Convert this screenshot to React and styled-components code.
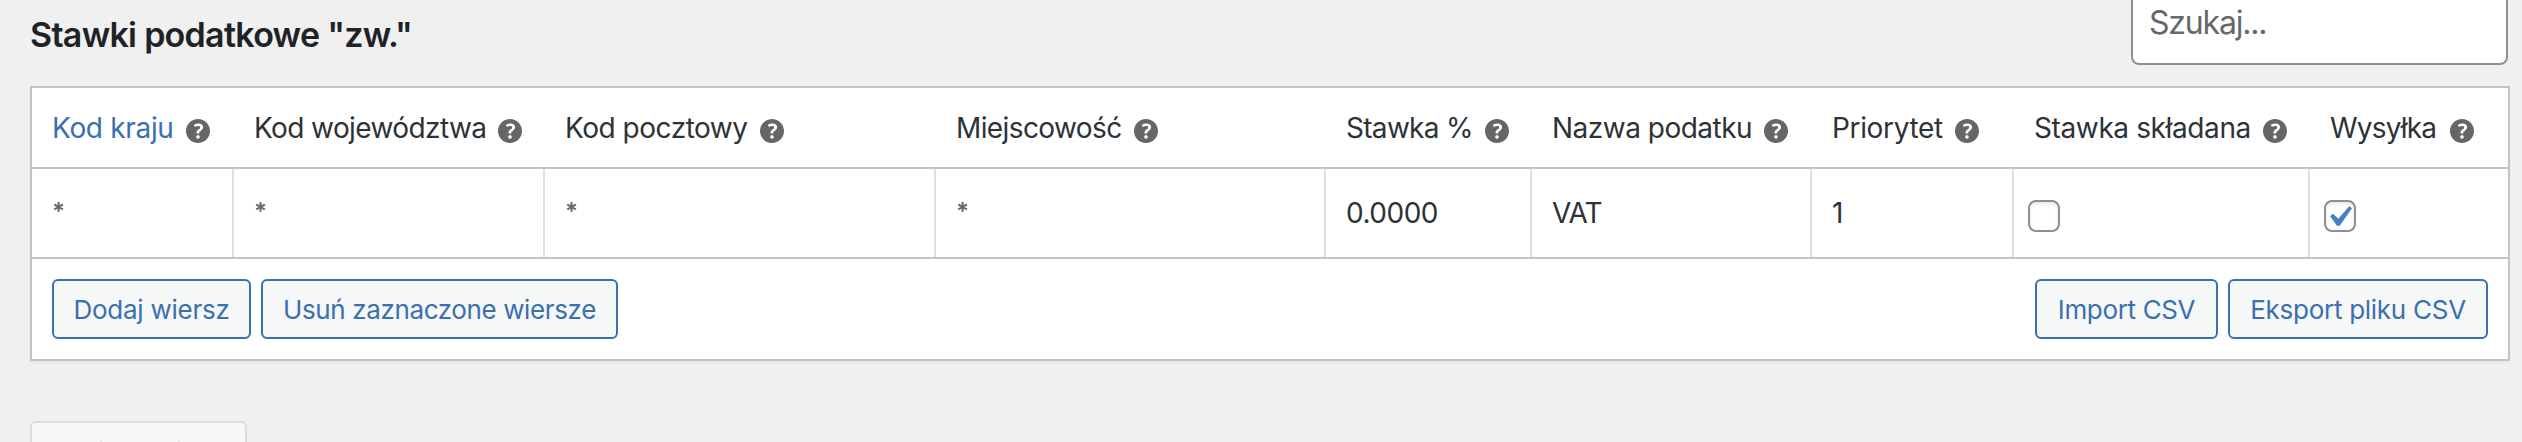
import React, { useState } from 'react';
import styled, { createGlobalStyle, css } from 'styled-components';

const GlobalStyle = createGlobalStyle`
  *, *::before, *::after {
    box-sizing: border-box;
  }

  body {
    margin: 0;
    background: #f0f0f0;
    color: #2c3338;
    font-family: Inter, "Liberation Sans", sans-serif;
    font-size: 28px;
    line-height: 34px;
  }
`;

const Page = styled.main`
  height: 442px;
  padding: 0 12px 0 30px;
  overflow: hidden;
`;

const TopBar = styled.header`
  display: flex;
  justify-content: space-between;
  align-items: flex-start;
  height: 86px;
  padding-right: 2px;
`;

const Title = styled.h2`
  margin: 14px 0 0;
  color: #1d2327;
  font-size: 34px;
  font-weight: 600;
  line-height: 41px;
  letter-spacing: -0.72px;
`;

const SearchInput = styled.input`
  width: 377px;
  height: 65px;
  padding: 0 16px 18px;
  border: 2px solid #8c8f94;
  border-top: 0;
  border-radius: 0 0 8px 8px;
  background: #fff;
  color: #2c3338;
  font-family: inherit;
  font-size: 32px;
  letter-spacing: -1.2px;
  outline: none;

  &::placeholder {
    color: #646970;
    opacity: 1;
  }
`;

const Table = styled.section`
  border: 2px solid #c3c4c7;
  background: #fff;
  box-shadow: 0 2px 2px rgba(0, 0, 0, 0.04);
`;

const columnGrid = css`
  display: grid;
  grid-template-columns: 202px 311px 391px 390px 206px 280px 202px 296px 1fr;
  border-bottom: 2px solid #c3c4c7;
`;

const HeadRow = styled.div`
  ${columnGrid}
  height: 81px;
`;

const HeadCell = styled.div`
  display: flex;
  align-items: flex-start;
  gap: ${({ $gap }) => $gap || 12}px;
  padding: 23px 0 0 20px;
  color: ${({ $active }) => ($active ? '#3a6fb0' : '#2c3338')};
  letter-spacing: ${({ $tracking }) => $tracking}px;
  white-space: nowrap;
`;

const HelpIcon = styled.svg`
  flex: none;
  width: 24px;
  height: 24px;
  margin-top: 8px;
  fill: #666;
`;

const BodyRow = styled.div`
  ${columnGrid}
  height: 90px;
`;

const Cell = styled.div`
  display: flex;
  align-items: center;
  padding-left: ${({ $check }) => ($check ? 14 : 20)}px;
  border-right: 2px solid #dfdfdf;
  letter-spacing: ${({ $tracking }) => $tracking || 0}px;

  &:last-child {
    border-right: 0;
  }
`;

const Wildcard = styled.span`
  padding-bottom: 3px;
  color: #646970;
  font-size: 24px;
  font-weight: 600;
`;

const Checkbox = styled.button`
  position: relative;
  width: 32px;
  height: 32px;
  margin: 6px 0 0;
  padding: 0;
  border: 2px solid #8c8f94;
  border-radius: 8px;
  background: #fff;
  box-shadow: inset 0 2px 4px rgba(0, 0, 0, 0.1);
`;

const CheckMark = styled.svg`
  position: absolute;
  top: -6px;
  left: -8px;
  width: 42px;
  height: 42px;
  fill: #4680c4;
`;

const Footer = styled.div`
  display: flex;
  justify-content: space-between;
  padding: 20px;
`;

const ButtonGroup = styled.div`
  display: flex;
  gap: 10px;
`;

const Button = styled.button`
  width: ${({ $width }) => $width}px;
  height: 60px;
  padding: 2px 0 0;
  border: 2px solid #3a6fb0;
  border-radius: 6px;
  background: #f6f7f7;
  color: #3a6fb0;
  font-family: inherit;
  font-size: 26px;
  line-height: 32px;
  letter-spacing: ${({ $tracking }) => $tracking}px;
  white-space: nowrap;
`;

const SaveButton = styled(Button)`
  display: block;
  margin-top: 60px;
  padding-top: 3px;
  border-color: #dcdcdc;
  color: #a7aaad;
`;

const columns = [
  { label: 'Kod kraju', tracking: -0.32, active: true },
  { label: 'Kod województwa', tracking: -0.6 },
  { label: 'Kod pocztowy', tracking: -0.48 },
  { label: 'Miejscowość', tracking: -0.6 },
  { label: 'Stawka %', tracking: -0.7 },
  { label: 'Nazwa podatku', tracking: -0.5 },
  { label: 'Priorytet', tracking: -0.35 },
  { label: 'Stawka składana', tracking: -0.38 },
  { label: 'Wysyłka', tracking: -0.8, gap: 14 },
];

const Help = () => (
  <HelpIcon viewBox="3 3 14 14" aria-hidden="true">
    <path d="M17 10c0-3.87-3.14-7-7-7-3.87 0-7 3.13-7 7s3.13 7 7 7c3.86 0 7-3.13 7-7zm-6.3 1.48H9.14v-.43c0-.38.08-.7.24-.98s.46-.57.88-.89c.41-.29.68-.53.81-.71.14-.18.2-.39.2-.62 0-.25-.09-.44-.28-.58-.19-.13-.45-.19-.79-.19-.58 0-1.25.19-2 .57l-.64-1.28c.87-.49 1.8-.74 2.77-.74.81 0 1.45.2 1.92.58.48.39.71.91.71 1.55 0 .43-.09.8-.29 1.11-.19.32-.57.67-1.11 1.06-.38.28-.61.49-.71.63-.1.15-.15.34-.15.57v.35zm-1.47 2.74c-.18-.17-.27-.42-.27-.73 0-.33.08-.58.26-.75s.43-.25.77-.25c.32 0 .57.09.75.26s.27.42.27.74c0 .3-.09.55-.27.72-.18.18-.43.27-.75.27-.33 0-.58-.09-.76-.26z" />
  </HelpIcon>
);

const CheckboxField = ({ label, defaultChecked = false }) => {
  const [checked, setChecked] = useState(defaultChecked);

  return (
    <Checkbox
      type="button"
      role="checkbox"
      aria-label={label}
      aria-checked={checked}
      onClick={() => setChecked(!checked)}
    >
      {checked && (
        <CheckMark viewBox="0 0 20 20">
          <path d="M14.83 4.89l1.34.94-5.81 8.38H9.02L5.78 9.67l1.34-1.25 2.57 2.4z" />
        </CheckMark>
      )}
    </Checkbox>
  );
};

const App = () => (
  <>
    <GlobalStyle />
    <Page>
      <TopBar>
        <Title>Stawki podatkowe "zw."</Title>
        <SearchInput type="text" placeholder="Szukaj..." />
      </TopBar>

      <Table>
        <HeadRow>
          {columns.map(({ label, tracking, gap, active }) => (
            <HeadCell key={label} $tracking={tracking} $gap={gap} $active={active}>
              {label}
              <Help />
            </HeadCell>
          ))}
        </HeadRow>

        <BodyRow>
          <Cell><Wildcard>*</Wildcard></Cell>
          <Cell><Wildcard>*</Wildcard></Cell>
          <Cell><Wildcard>*</Wildcard></Cell>
          <Cell><Wildcard>*</Wildcard></Cell>
          <Cell $tracking={-0.5}>0.0000</Cell>
          <Cell $tracking={-0.9}>VAT</Cell>
          <Cell>1</Cell>
          <Cell $check><CheckboxField label="Stawka składana" /></Cell>
          <Cell $check><CheckboxField label="Wysyłka" defaultChecked /></Cell>
        </BodyRow>

        <Footer>
          <ButtonGroup>
            <Button $width={199} $tracking={-0.25}>Dodaj wiersz</Button>
            <Button $width={357} $tracking={-0.38}>Usuń zaznaczone wiersze</Button>
          </ButtonGroup>
          <ButtonGroup>
            <Button $width={183} $tracking={-0.35}>Import CSV</Button>
            <Button $width={260} $tracking={-0.27}>Eksport pliku CSV</Button>
          </ButtonGroup>
        </Footer>
      </Table>

      <SaveButton $width={217} $tracking={-0.2} disabled>Zapisz zmiany</SaveButton>
    </Page>
  </>
);

export default App;
